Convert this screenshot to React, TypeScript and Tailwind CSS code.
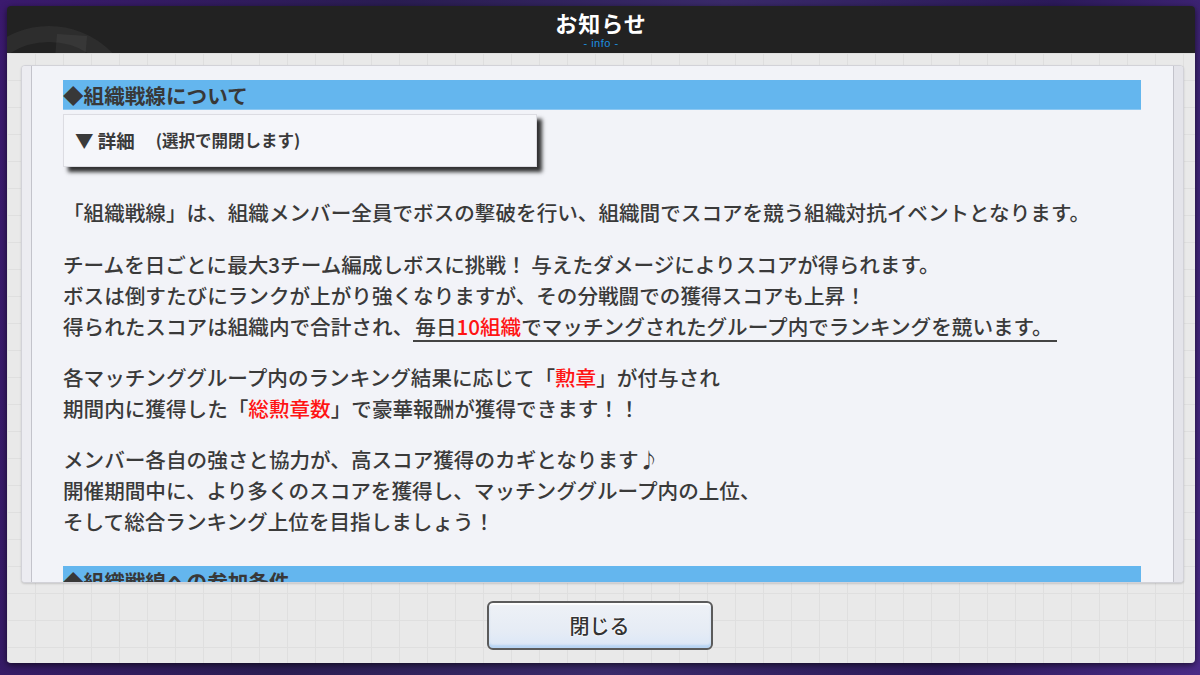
import React from "react";

const red = "text-[#ff1414]";

export default function App() {
  return (
    <div className="w-[1200px] h-[675px] overflow-hidden bg-[linear-gradient(100deg,#3b1a6e_0%,#2a1d52_30%,#3a2a6a_55%,#2c1a5a_80%,#4a2a86_100%)] pt-[6px] pl-[7px] pr-[5px] pb-[12px] font-['Noto_Sans_CJK_JP','Noto_Sans',sans-serif]">
      <div className="relative h-full w-full flex flex-col rounded-[4px] overflow-hidden shadow-[0_2px_6px_rgba(0,0,0,0.6)]">
        {/* header */}
        <div className="relative h-[47px] bg-[#222222] flex flex-col items-center shrink-0 overflow-hidden">
          <svg className="absolute left-[-20px] top-[8px]" width="200" height="140" viewBox="0 0 200 140">
            <circle cx="62" cy="100" r="80" fill="none" stroke="rgba(255,255,255,0.05)" strokeWidth="16" />
            <path d="M70 20 L100 22 L92 120 L62 118 Z" fill="rgba(255,255,255,0.05)" />
          </svg>
          <div className="relative mt-[1px] text-white text-[22px] leading-[30px] font-bold tracking-[1px]">お知らせ</div>
          <div className="relative text-[#1d8fe0] text-[11px] leading-[12px] font-['Liberation_Sans',sans-serif] tracking-[0.5px]">- info -</div>
        </div>
        {/* body */}
        <div className="flex-1 flex flex-col items-stretch bg-[#e9e9e9] bg-[linear-gradient(to_right,#dfdfdf_1px,transparent_1px),linear-gradient(to_bottom,#dfdfdf_1px,transparent_1px)] bg-[size:28px_27px] pt-[12px] pl-[14px] pr-[11px]">
          {/* panel */}
          <div className="h-[518px] shrink-0 flex rounded-[4px] border border-[#d2d2d8] bg-[#f0f0f4] overflow-hidden shadow-[0_1px_2px_rgba(0,0,0,0.15)]">
            <div className="w-[10px] border-r border-[#c3c3cb] bg-[#ececf1]" />
            <div className="flex-1 bg-[#f2f3f8] overflow-hidden pl-[31px] pr-[32px] pt-[14px] text-[#3a3a3a] font-medium text-[20.6px] leading-[31px]">
              <div className="h-[30px] bg-[#64b6ee] border-b border-[#8cc8f2] leading-[30px] text-[#383838] text-[20.6px] font-bold">◆組織戦線について</div>
              <div className="mt-[4px] w-[474px] h-[53px] bg-[#f5f6fa] border border-[#dcdce2] shadow-[5px_5px_4px_rgba(0,0,0,0.8)] flex items-center pl-[11px] text-[#3a3a3a]">
                <span className="text-[18.5px] font-bold">▼ 詳細</span>
                <span className="ml-[21px] text-[16.5px] font-bold">(選択で開閉します)</span>
              </div>
              <p className="mt-[30px]">「組織戦線」は、組織メンバー全員でボスの撃破を行い、組織間でスコアを競う組織対抗イベントとなります。</p>
              <p className="mt-[21px]">
                チームを日ごとに最大3チーム編成しボスに挑戦！ 与えたダメージによりスコアが得られます。
                <br />
                ボスは倒すたびにランクが上がり強くなりますが、その分戦闘での獲得スコアも上昇！
                <br />
                得られたスコアは組織内で合計され、
                <span className="inline-block leading-[27px] border-b-2 border-[#444] pl-[2px] pr-[4px]">
                  毎日<span className={red}>10組織</span>でマッチングされたグループ内でランキングを競います。
                </span>
              </p>
              <p className="mt-[20px]">
                各マッチンググループ内のランキング結果に応じて「<span className={red}>勲章</span>」が付与され
                <br />
                期間内に獲得した「<span className={red}>総勲章数</span>」で豪華報酬が獲得できます！！
              </p>
              <p className="mt-[20px]">
                メンバー各自の強さと協力が、高スコア獲得のカギとなります♪
                <br />
                開催期間中に、より多くのスコアを獲得し、マッチンググループ内の上位、
                <br />
                そして総合ランキング上位を目指しましょう！
              </p>
              <div className="mt-[29px] h-[30px] bg-[#64b6ee] border-b border-[#8cc8f2] leading-[30px] text-[#383838] text-[20.6px] font-bold">◆組織戦線への参加条件</div>
            </div>
            <div className="w-[10px] border-l border-[#c3c3cb] bg-[#e4e4ea]" />
          </div>
          {/* button area */}
          <div className="flex-1 flex justify-center pt-[18px] pr-[6px]">
            <button className="w-[226px] h-[49px] rounded-[6px] border-2 border-[#5b5b5b] bg-[linear-gradient(to_bottom,#eef1f6_0%,#e6ecf5_60%,#dbe7f7_100%)] shadow-[inset_0_-3px_2px_rgba(160,200,240,0.6),inset_0_2px_1px_rgba(255,255,255,0.9)] text-[#333] text-[20px] font-medium [text-shadow:0_0_2px_#fff,0_0_2px_#fff]">
              閉じる
            </button>
          </div>
        </div>
      </div>
    </div>
  );
}
